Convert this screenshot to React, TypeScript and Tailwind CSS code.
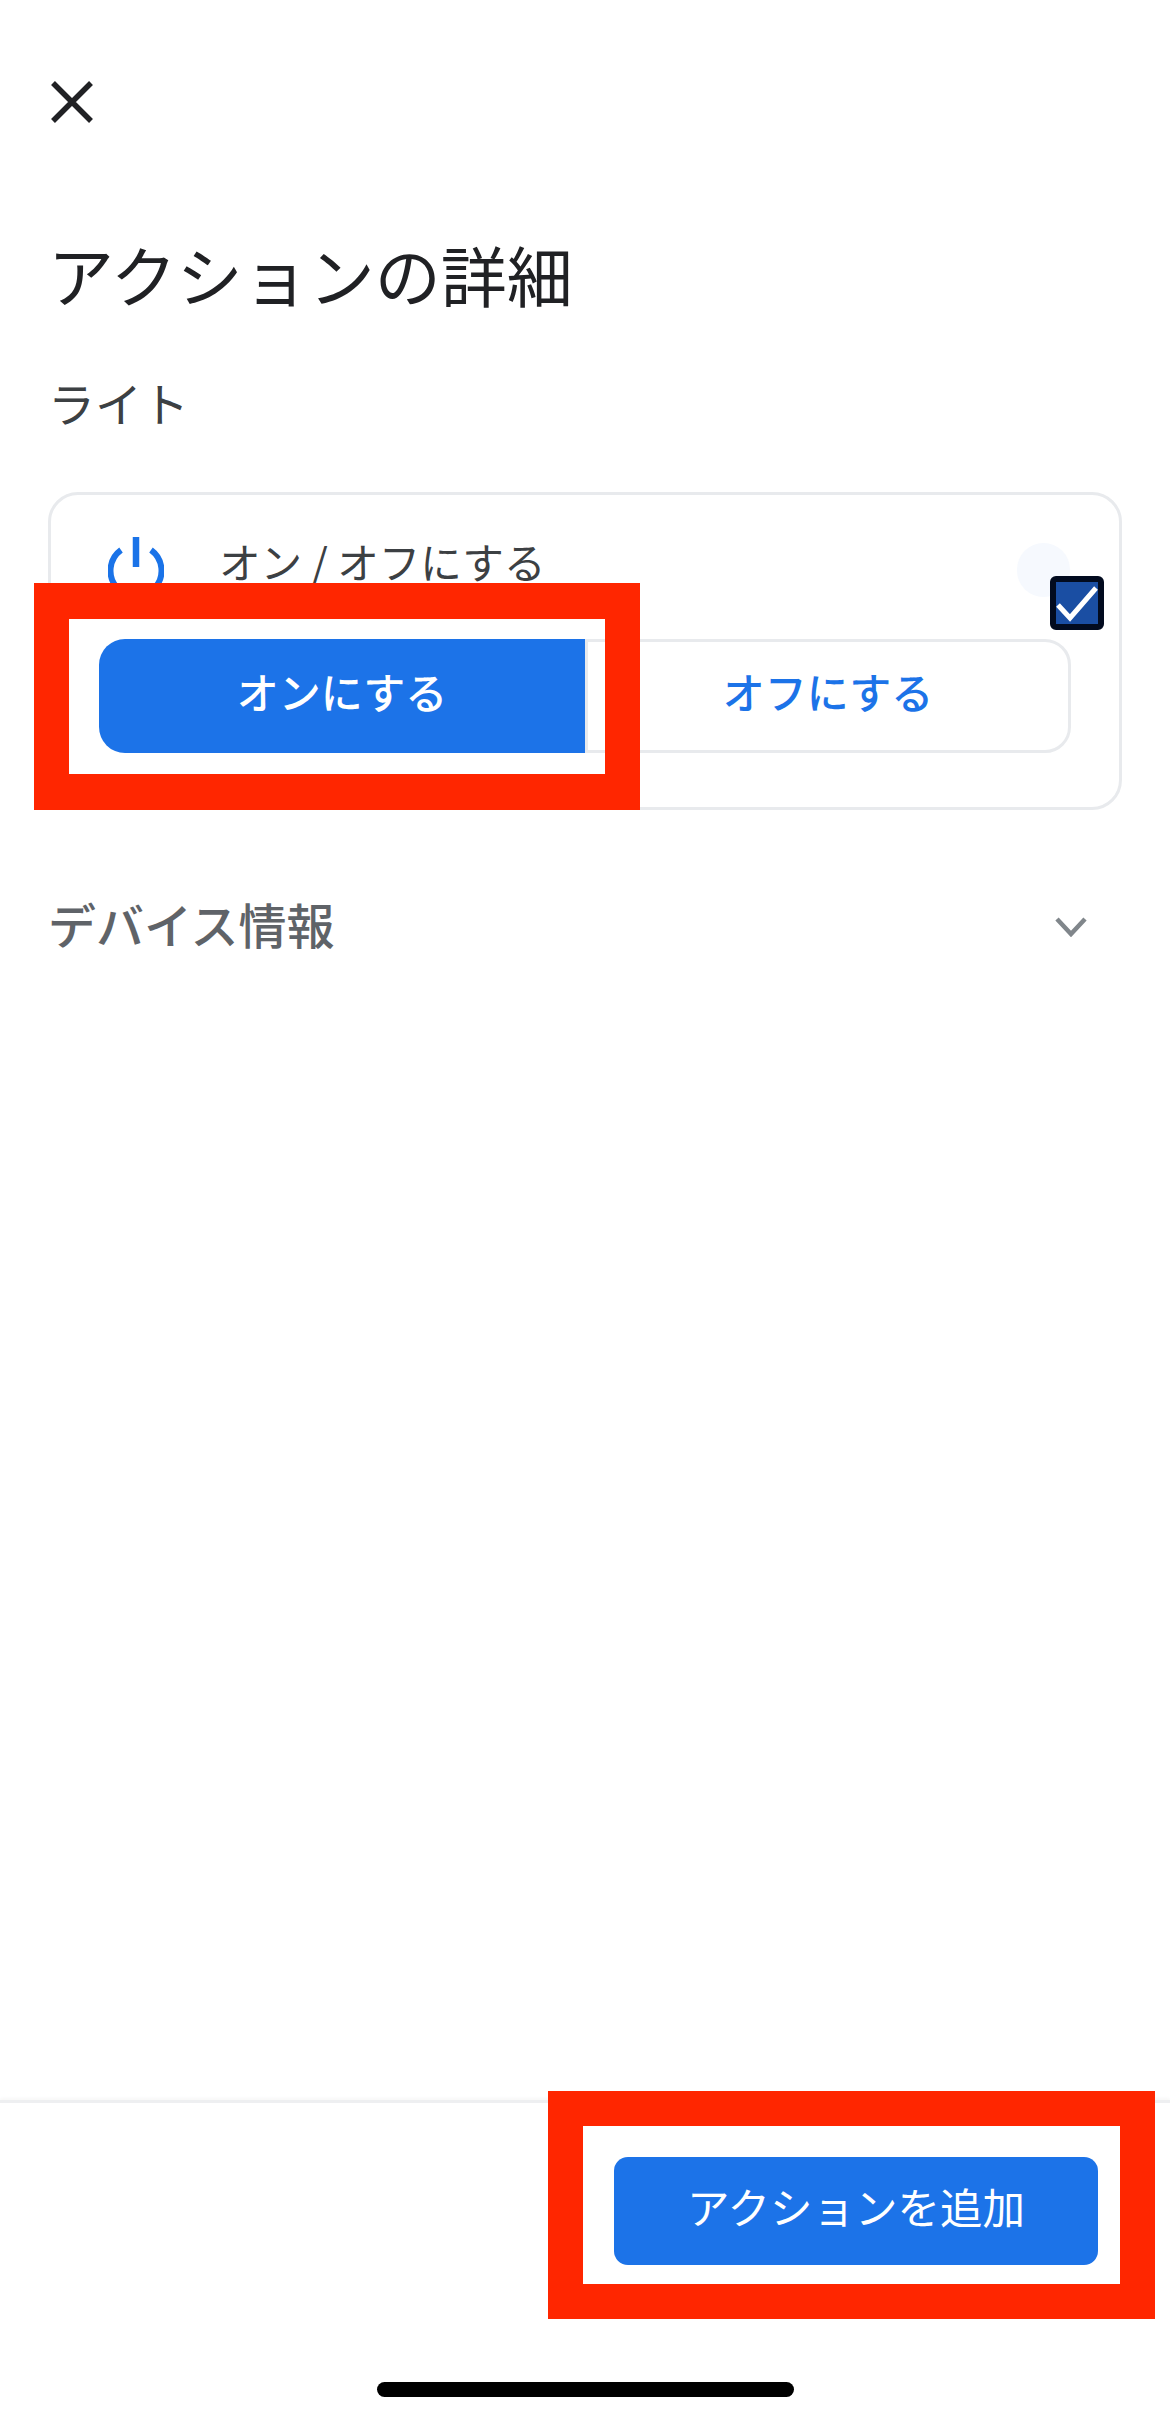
import React from "react";

function RedFrame({ className }: { className: string }) {
  return <div className={`absolute border-solid border-[#ff2600] bg-transparent ${className}`} />;
}

export default function App() {
  return (
    <div className="relative flex h-[2421px] w-[1170px] flex-col overflow-hidden bg-white font-['Noto_Sans_CJK_JP',sans-serif]">
      <div className="flex flex-1 flex-col px-[48px] pt-[81px]">
        <svg width="42" height="42" viewBox="0 0 42 42" className="ml-[3px]" fill="none">
          <path d="M2 2 L40 40 M40 2 L2 40" stroke="#202124" strokeWidth="5.5" />
        </svg>

        <h1 className="mt-[110px] text-[66px] leading-[80px] font-normal text-[#202124]">アクションの詳細</h1>
        <p className="mt-[59px] text-[47px] leading-[60px] text-[#3c4043]">ライト</p>

        <div className="relative mt-[60px] h-[318px] w-[1074px] rounded-[30px] border-[3px] border-[#e8eaed] pl-[48px] pt-[38px]">
          <div className="flex h-[60px] items-center">
            <svg width="56" height="64" viewBox="0 0 56 64" className="ml-[9px] mt-[12px]" fill="none">
              <path d="M13 13 A25.5 25.5 0 1 0 43 13" stroke="#1a73e8" strokeWidth="6" />
              <path d="M28 0 V30" stroke="#1a73e8" strokeWidth="6.5" />
            </svg>
            <span className="ml-[55px] pb-[5px] text-[41.6px] leading-[60px] text-[#3c4043]">オン / オフにする</span>
          </div>

          <div className="mt-[46px] flex h-[114px] w-[972px]">
            <div className="flex h-full w-[486px] items-center justify-center rounded-l-[26px] bg-[#1c73e8] pb-[12px] text-[42px] font-medium text-white">
              オンにする
            </div>
            <div className="flex h-full w-[486px] items-center justify-center rounded-r-[26px] border-[3px] border-[#e8eaed] pb-[12px] text-[42px] font-medium text-[#1c73e8]">
              オフにする
            </div>
          </div>

          <div className="absolute left-[966px] top-[48px] h-[54px] w-[53px] rounded-full bg-[#f6f9fe]" />
          <div className="absolute left-[999px] top-[81px] flex h-[54px] w-[54px] items-center justify-center rounded-[6px] border-[6px] border-[#020b1f] bg-[#1a4ea3]">
            <svg width="42" height="42" viewBox="0 0 42 42" fill="none">
              <path d="M2 23 L14 36 L40 6" stroke="#ffffff" strokeWidth="5" />
            </svg>
          </div>
        </div>

        <div className="mt-[84px] flex h-[60px] items-center justify-between">
          <span className="pb-[2px] text-[48px] leading-[60px] font-medium text-[#5f6368]">デバイス情報</span>
          <svg width="32" height="20" viewBox="0 0 32 20" className="mr-[35px] mt-[5px]" fill="none">
            <path d="M2 2 L16 17 L30 2" stroke="#80868b" strokeWidth="4.5" />
          </svg>
        </div>
      </div>

      <div className="flex h-[321px] flex-col border-t-[3px] border-[#eeeff1] pt-[54px] shadow-[0_-2px_3px_rgba(0,0,0,0.03)]">
        <div className="flex justify-end pr-[72px]">
          <div className="flex h-[108px] w-[484px] items-center justify-center rounded-[14px] bg-[#1c73e8] pb-[11px] text-[42.5px] text-white">
            アクションを追加
          </div>
        </div>
        <div className="mx-auto mt-[117px] h-[15px] w-[417px] rounded-full bg-black" />
      </div>

      <RedFrame className="left-[34px] top-[583px] h-[227px] w-[606px] border-x-[35px] border-y-[36px]" />
      <RedFrame className="left-[548px] top-[2091px] h-[228px] w-[607px] border-x-[35px] border-y-[35px]" />
    </div>
  );
}
